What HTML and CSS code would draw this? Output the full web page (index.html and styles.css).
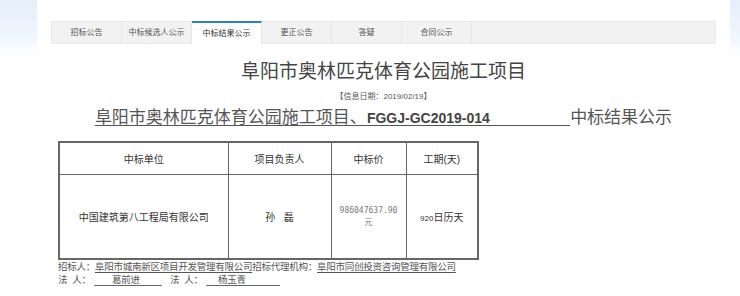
FILE: index.html
```html
<!DOCTYPE html>
<html lang="zh-CN">
<head>
  <meta charset="UTF-8" />
  <title>中标结果公示</title>
  <link rel="stylesheet" href="styles.css">
</head>
<body>
  <div class="page">
    <div class="side side-left"></div>

    <div class="main">
      <ul class="tabs">
        <li>招标公告</li>
        <li>中标候选人公示</li>
        <li class="active">中标结果公示</li>
        <li>更正公告</li>
        <li>答疑</li>
        <li>合同公示</li>
        <li class="rest"></li>
      </ul>

      <h1 class="title">阜阳市奥林匹克体育公园施工项目</h1>
      <div class="date">【信息日期：2019/02/19】</div>
      <h2 class="subtitle"><span class="u">阜阳市奥林匹克体育公园施工项目、<b>FGGJ-GC2019-014</b>&nbsp;&nbsp;&nbsp;&nbsp;&nbsp;&nbsp;&nbsp;&nbsp;&nbsp;&nbsp;&nbsp;&nbsp;&nbsp;&nbsp;&nbsp;&nbsp;&nbsp;</span>中标结果公示</h2>

      <table class="result">
        <colgroup>
          <col class="c1">
          <col class="c2">
          <col class="c3">
          <col class="c4">
        </colgroup>
        <tr class="head">
          <td>中标单位</td>
          <td>项目负责人</td>
          <td>中标价</td>
          <td>工期(天)</td>
        </tr>
        <tr class="body">
          <td>中国建筑第八工程局有限公司</td>
          <td>孙&nbsp;&nbsp;&nbsp;磊</td>
          <td class="price">986047637.90<br>元</td>
          <td><span class="num">920</span>日历天</td>
        </tr>
      </table>

      <div class="foot">
        <p>招标人：<span class="u">阜阳市城南新区项目开发管理有限公司</span>招标代理机构：<span class="u">阜阳市同创投资咨询管理有限公司</span></p>
        <p class="sign"><span class="label">法<i></i>人：</span><span class="fill first">葛前进</span><span class="label gap">法<i></i>人：</span><span class="fill second">杨玉青</span></p>
      </div>
    </div>

    <div class="side side-right"></div>
  </div>
</body>
</html>
```

FILE: styles.css
```css
body, html {
  margin: 0;
  padding: 0;
  background-color: #fff;
  font-family: "Liberation Sans", "Noto Sans CJK SC", sans-serif;
  color: #333;
}

.page {
  display: flex;
  width: 740px;
  height: 296px;
  overflow: hidden;
}

.side {
  background: linear-gradient(#e4effb, #f1f7fe 40px, #fbfdff 50px, #fff 60px);
}

.side-left {
  width: 37px;
}

.side-right {
  width: 10px;
}

.main {
  width: 693px;
  background-color: #fff;
}

.tabs {
  list-style: none;
  display: flex;
  margin: 21px 14px 0;
  padding: 0;
  height: 23px;
  background-color: #f2f2f2;
  border: 1px solid #e8e8e8;
  box-sizing: border-box;
}

.tabs li {
  width: 70px;
  flex: none;
  font-size: 8px;
  line-height: 21px;
  white-space: nowrap;
  text-align: center;
  color: #555;
  border-right: 1px solid #e4e4e4;
  box-sizing: border-box;
}

.tabs li.active {
  background-color: #fff;
  border-top: 2px solid #2f7fc5;
  margin-top: -1px;
  height: 23px;
  line-height: 22px;
  color: #333;
}

.tabs li.rest {
  flex: 1;
  border-right: none;
}

.title {
  margin: 15px 0 0;
  font-size: 19px;
  font-weight: normal;
  line-height: 26px;
  text-align: center;
  color: #444;
}

.date {
  font-size: 8px;
  line-height: 10px;
  text-align: center;
  color: #555;
  margin-top: 7px;
}

.subtitle {
  margin: 4px 0 0;
  font-size: 17px;
  font-weight: normal;
  line-height: 24px;
  text-align: center;
  color: #555;
}

.subtitle b {
  font-size: 14px;
  font-weight: bold;
  color: #444;
}

.u {
  text-decoration: underline;
  text-underline-offset: 2px;
  white-space: pre;
}

.result {
  margin: 11px 0 0 21px;
  border-collapse: collapse;
  table-layout: fixed;
  width: 419px;
  border: 2px solid #666;
}

.result .c1 { width: 169px; }
.result .c2 { width: 103px; }
.result .c3 { width: 75px; }
.result .c4 { width: 72px; }

.result td {
  border: 1px solid #666;
  font-size: 10px;
  text-align: center;
  color: #333;
  padding: 0;
  overflow: hidden;
}

.result .head td {
  height: 31px;
}

.result .body td {
  height: 83px;
}

.result .price {
  font-family: "DejaVu Sans Mono", "Noto Sans CJK SC", monospace;
  font-size: 8px;
  line-height: 12px;
  color: #777;
}

.result .num {
  font-size: 8px;
}

.foot {
  margin-left: 21px;
  font-size: 9.5px;
  letter-spacing: -0.25px;
  color: #555;
}

.foot p {
  margin: 0;
  line-height: 13px;
}

.sign {
  display: flex;
  align-items: flex-end;
}

.sign .label i {
  display: inline-block;
  width: 5px;
}

.sign .label {
  width: 36px;
  flex: none;
}

.sign .gap {
  margin-left: 8px;
}

.sign .fill {
  flex: none;
  box-sizing: border-box;
  border-bottom: 1px solid #666;
  line-height: 11px;
}

.sign .first {
  width: 68px;
  padding-left: 18px;
}

.sign .second {
  width: 74px;
  padding-left: 12px;
}
```
